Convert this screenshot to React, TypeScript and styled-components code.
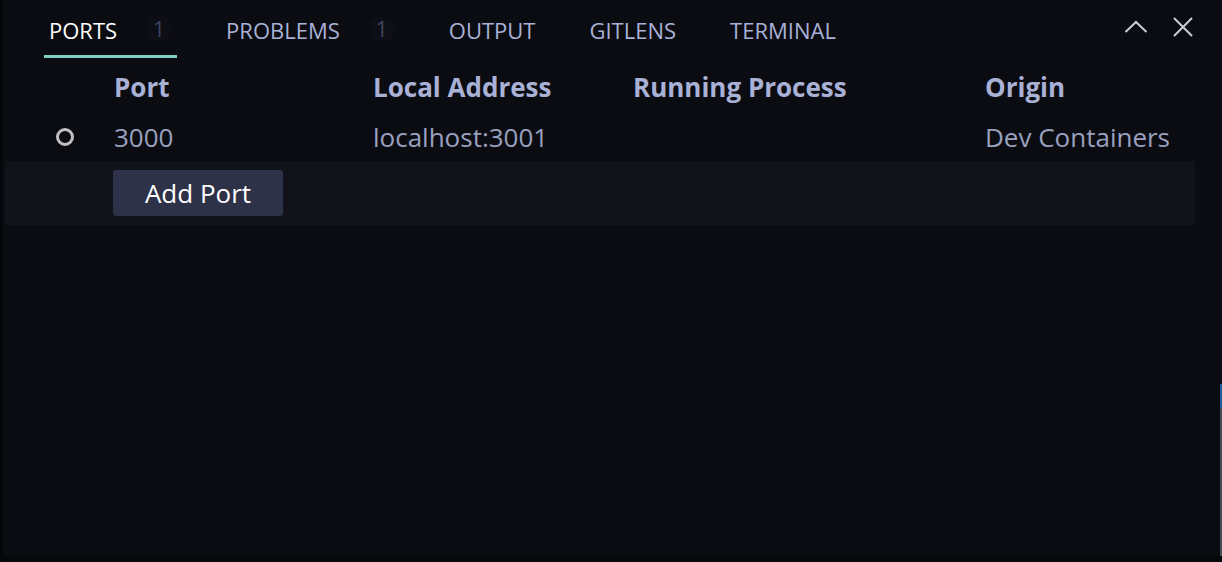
import React from 'react';
import styled, { createGlobalStyle } from 'styled-components';

const GlobalStyle = createGlobalStyle`
  html, body {
    margin: 0;
    padding: 0;
    background: #0a0b10;
    font-family: "Open Sans", "Noto Sans", sans-serif;
  }
`;

const Panel = styled.div`
  width: 1222px;
  height: 562px;
  box-sizing: border-box;
  background: #0b0c12;
  border-left: 3px solid #06070a;
  border-bottom: 6px solid #07080b;
  position: relative;
  overflow: hidden;
`;

const TabBar = styled.div`
  display: flex;
  align-items: stretch;
  height: 58px;
  padding-left: 41px;
  padding-right: 28px;
`;

const Tabs = styled.div`
  display: flex;
  gap: 44px;
  flex: 1;
`;

const Tab = styled.div<{ $active?: boolean }>`
  display: flex;
  align-items: center;
  gap: 29px;
  padding: 4px 5px 0;
  font-size: 22px;
  color: ${({ $active }) => ($active ? '#ffffff' : '#a9b1d6')};
  border-bottom: 3px solid ${({ $active }) => ($active ? '#7dcfc4' : 'transparent')};
  box-sizing: border-box;
`;

const Badge = styled.span`
  display: inline-flex;
  align-items: center;
  justify-content: center;
  width: 26px;
  height: 26px;
  border-radius: 50%;
  background: #0e0f16;
  color: #3f4560;
  font-size: 21px;
  margin-top: -2px;
`;

const Actions = styled.div`
  display: flex;
  align-items: center;
  gap: 24px;
  padding-bottom: 4px;
  color: #c8ccd8;
`;

const IconButton = styled.button`
  background: none;
  border: none;
  padding: 0;
  display: flex;
  color: inherit;
`;

const Table = styled.div`
  margin-left: 2px;
  width: 1190px;
`;

const Row = styled.div<{ $band?: boolean; $height: number }>`
  display: grid;
  grid-template-columns: 109px 259px 260px 352px 1fr;
  align-items: center;
  height: ${({ $height }) => $height}px;
  background: ${({ $band }) => ($band ? '#12131a' : 'transparent')};
`;

const HeadCell = styled.div`
  font-size: 26px;
  font-weight: 700;
  color: #a9b1d6;
  padding-top: 2px;
`;

const Cell = styled.div`
  font-size: 26px;
  color: #9aa0bf;
`;

const IconCell = styled.div`
  display: flex;
  justify-content: flex-end;
  padding-right: 40px;
`;

const Ring = styled.span`
  width: 12px;
  height: 12px;
  border: 3px solid #c0c0c4;
  border-radius: 50%;
`;

const AddButton = styled.button`
  background: #2e3248;
  color: #ffffff;
  border: none;
  border-radius: 3px;
  height: 46px;
  width: 170px;
  margin-left: -1px;
  font-family: "Open Sans", "Noto Sans", sans-serif;
  font-size: 26px;
  padding: 0;
`;

const ScrollTrack = styled.div`
  position: absolute;
  right: 0;
  top: 384px;
  bottom: 0;
  width: 2px;
  background: #4a4d55;
`;

const ScrollThumb = styled.div`
  height: 24px;
  background: #1f5f99;
`;

const tabs = [
  { label: 'PORTS', badge: '1', active: true },
  { label: 'PROBLEMS', badge: '1' },
  { label: 'OUTPUT' },
  { label: 'GITLENS' },
  { label: 'TERMINAL' },
];

const App: React.FC = () => {
  return (
    <>
      <GlobalStyle />
      <Panel>
        <TabBar>
          <Tabs>
            {tabs.map((t) => (
              <Tab key={t.label} $active={t.active}>
                {t.label}
                {t.badge && <Badge>{t.badge}</Badge>}
              </Tab>
            ))}
          </Tabs>
          <Actions>
            <IconButton>
              <svg width="24" height="14" viewBox="0 0 24 14" fill="none" stroke="currentColor" strokeWidth="2">
                <path d="M1.5 12 L12 2 L22.5 12" />
              </svg>
            </IconButton>
            <IconButton>
              <svg width="22" height="22" viewBox="0 0 22 22" fill="none" stroke="currentColor" strokeWidth="2">
                <path d="M2 2 L20 20 M20 2 L2 20" />
              </svg>
            </IconButton>
          </Actions>
        </TabBar>
        <Table>
          <Row $height={55}>
            <div />
            <HeadCell>Port</HeadCell>
            <HeadCell>Local Address</HeadCell>
            <HeadCell>Running Process</HeadCell>
            <HeadCell>Origin</HeadCell>
          </Row>
          <Row $height={48}>
            <IconCell>
              <Ring />
            </IconCell>
            <Cell>3000</Cell>
            <Cell>localhost:3001</Cell>
            <Cell />
            <Cell>Dev Containers</Cell>
          </Row>
          <Row $band $height={64}>
            <div />
            <div>
              <AddButton>Add Port</AddButton>
            </div>
          </Row>
        </Table>
        <ScrollTrack>
          <ScrollThumb />
        </ScrollTrack>
      </Panel>
    </>
  );
};

export default App;
